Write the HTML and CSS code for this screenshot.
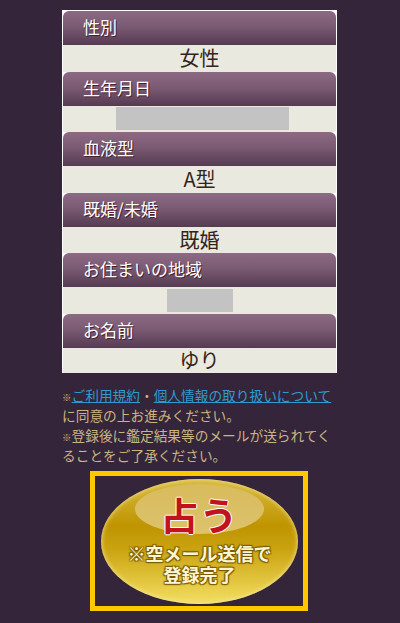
FILE: index.html
```html
<!DOCTYPE html>
<html lang="ja">
<head>
    <meta charset="UTF-8">
    <meta name="viewport" content="width=device-width, initial-scale=1.0">
    <title>鑑定申し込み</title>
    <link rel="stylesheet" href="styles.css">
</head>
<body>
    <div class="container">
        <dl class="profile">
            <dt>性別</dt>
            <dd>女性</dd>
            <dt>生年月日</dt>
            <dd><span class="masked masked-birth"></span></dd>
            <dt>血液型</dt>
            <dd>A型</dd>
            <dt>既婚/未婚</dt>
            <dd>既婚</dd>
            <dt>お住まいの地域</dt>
            <dd><span class="masked masked-area"></span></dd>
            <dt>お名前</dt>
            <dd>ゆり</dd>
        </dl>
        <div class="notes">
            <p><span class="mark">※</span><a href="#">ご利用規約</a>・<a href="#">個人情報の取り扱いについて</a>に同意の上お進みください。</p>
            <p><span class="mark">※</span>登録後に鑑定結果等のメールが送られてくることをご了承ください。</p>
        </div>
        <div class="submit-frame">
            <button class="submit" type="button">
                <span class="shine"></span>
                <span class="submit-main">占う</span>
                <span class="submit-sub">※空メール送信で<br>登録完了</span>
            </button>
        </div>
    </div>
</body>
</html>
```

FILE: styles.css
```css
* {
    box-sizing: border-box;
}
html, body {
    height: 100%;
}
body {
    margin: 0;
    background-color: #34253b;
    font-family: "Noto Sans CJK JP", "Liberation Sans", sans-serif;
    overflow: hidden;
}
.container {
    width: 275px;
    margin-left: 62px;
    padding-top: 10px;
}
.profile {
    margin: 0;
    padding: 1px 1px 0;
    background-color: #ffffff;
}
.profile dt {
    height: 34px;
    padding-left: 20px;
    border-radius: 6px 6px 0 0;
    background: linear-gradient(to bottom, #8d6a84 0%, #7b5a74 45%, #553b52 100%);
    color: #ffffff;
    font-size: 17px;
    line-height: 31px;
    text-shadow: 1px 1px 0 #4a1f2c;
}
.profile dd {
    display: flex;
    justify-content: center;
    align-items: center;
    height: 26.5px;
    margin: 0;
    background-color: #e9e9df;
    color: #33241a;
    font-size: 20px;
    line-height: 26px;
}
.profile dd:last-child {
    height: 25.5px;
}
.masked {
    display: block;
    height: 23px;
    background-color: #c3c3c3;
}
.masked-birth {
    width: 173px;
    margin-left: 5px;
}
.masked-area {
    width: 66px;
}
.notes {
    margin-top: 12px;
    color: #c9b57f;
    font-size: 13.7px;
    line-height: 20px;
}
.notes p {
    margin: 0;
}
.notes a {
    color: #2d9bd0;
}
.mark {
    font-size: 9.5px;
    line-height: 0;
}
.submit-frame {
    width: 218px;
    height: 140px;
    margin: 6px 0 0 28px;
    padding: 3px 5px 0 6px;
    border: 5px solid #fdc800;
}
.submit {
    position: relative;
    display: block;
    width: 197px;
    height: 125px;
    padding: 0;
    border: none;
    border-radius: 50%;
    background: linear-gradient(to bottom, #d8b93f 0%, #bf9400 38%, #c9a20f 55%, #e3c640 82%, #f3df63 100%);
    box-shadow: inset 0 0 5px #f5e9a5;
    font-family: "Noto Sans CJK JP", "Liberation Sans", sans-serif;
}
.shine {
    position: absolute;
    top: 5px;
    left: 34px;
    width: 129px;
    height: 50px;
    border-radius: 50%;
    background: linear-gradient(to bottom, #d8bb5c, #ddc26c);
}
.submit-main {
    position: absolute;
    top: 8px;
    left: 0;
    width: 100%;
    color: #c2121c;
    font-size: 38px;
    font-weight: 700;
    letter-spacing: 1px;
    line-height: 54px;
    text-shadow: 1px 0 0 #ffffff, -1px 0 0 #ffffff, 0 1px 0 #ffffff, 0 -1px 0 #ffffff;
}
.submit-sub {
    position: absolute;
    top: 64px;
    left: 0;
    width: 100%;
    color: #fff6d6;
    font-size: 18px;
    font-weight: 700;
    line-height: 21px;
    text-shadow: 1px 1px 1px #7a5c00, -1px -1px 1px #7a5c00, 1px -1px 1px #7a5c00, -1px 1px 1px #7a5c00;
}
```
